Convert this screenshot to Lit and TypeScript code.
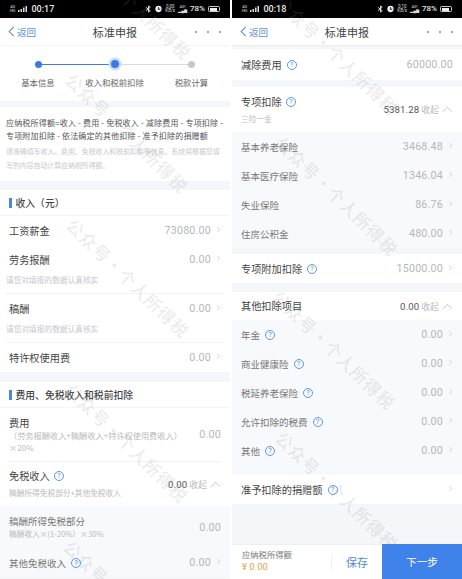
import { LitElement, html, css, nothing } from "lit";
import { customElement } from "lit/decorators.js";

const chev = html`<svg class="chev" viewBox="0 0 6 8"><path d="M1.5 1 L4.5 4 L1.5 7" fill="none" stroke="#c9ccd2" stroke-width="1"/></svg>`;
const up = html`<svg class="up" viewBox="0 0 12 8"><path d="M1 6.5 L6 1.5 L11 6.5" fill="none" stroke="#b9bcc2" stroke-width="1"/></svg>`;
const help = html`<span class="help">?</span>`;

function row(label: string, value: string, opts: { sub?: boolean; help?: boolean } = {}) {
  return html`<div class="row ${opts.sub ? "sub" : ""}">
    <div class="main">
      <div class="label">${label}${opts.help ? help : nothing}</div>
      <div class="value">${value}${chev}</div>
    </div>
  </div>`;
}

function noted(label: string, note: string) {
  return html`<div class="noted">
    <div class="main">
      <div class="label">${label}</div><div class="value">0.00${chev}</div>
    </div>
    <div class="note">${note}</div>
  </div>`;
}

function head(time: string, speed: string) {
  return html`
    <div class="status">
      <div class="st-left">
        <span class="tiny">4G<br />HD</span>
        <svg class="bars" viewBox="0 0 10 6"><rect x="0" y="4" width="1.5" height="2" fill="#ddd"/><rect x="2.5" y="3" width="1.5" height="3" fill="#ddd"/><rect x="5" y="1.5" width="1.5" height="4.5" fill="#ddd"/><rect x="7.5" y="0" width="1.5" height="6" fill="#ddd"/></svg>
        <span class="time">${time}</span>
      </div>
      <div class="st-right">
        <svg class="ic" viewBox="0 0 8 8"><path d="M1 2 L6 6 L4 7.5 V0.5 L6 2 L1 6" fill="none" stroke="#eee" stroke-width="1"/></svg>
        <svg class="ic" viewBox="0 0 8 8"><circle cx="4" cy="4" r="3.6" fill="#eee"/><path d="M4 2 V4.3 H6" fill="none" stroke="#000" stroke-width="1"/></svg>
        <span class="tiny speed">${speed}<br />KB/s</span>
        <span class="tiny">4G!<br />▂▄▆</span>
        <span class="pct">78%</span>
        <span class="batt"><i></i></span>
      </div>
    </div>
    <div class="nav">
      <div class="back"><svg viewBox="0 0 7 12"><path d="M6 1 L1 6 L6 11" fill="none" stroke="#4f88d8" stroke-width="1.1"/></svg>返回</div>
      <div class="title">标准申报</div>
      <div class="dots"><i></i><i></i><i></i></div>
    </div>`;
}

const marks: [number, number][] = [
  [130, 0], [127, 133], [128, 278], [127, 443], [125, 600],
  [337, 55], [337, 196], [334, 350], [337, 491],
];

@customElement("app-root")
export class AppRoot extends LitElement {
  static styles = css`
    :host { display: block; width: 462px; height: 579px; overflow: hidden; background: #fff;
      font-family: "Noto Sans CJK SC", "Noto Sans", sans-serif; position: relative; }
    .page { display: flex; gap: 2px; height: 579px; }
    .panel { flex: 1 1 0; min-width: 0; background: #f4f6f9; height: 579px; overflow: hidden; position: relative; display: flex; flex-direction: column; }
    .status { height: 18px; flex: none; background: #000; display: flex; justify-content: space-between; align-items: center; padding: 0 10px 0 10px; color: #e8e8e8; }
    .st-left, .st-right { display: flex; align-items: center; gap: 3px; }
    .tiny { font-size: 4px; line-height: 4px; color: #ddd; font-family: "Roboto", sans-serif; text-align: center; }
    .speed { font-size: 4.5px; }
    .bars { width: 10px; height: 6px; }
    .time { font: 500 9px/12px "Roboto", sans-serif; color: #e8e8e8; }
    .pct { font: 500 8px/12px "Roboto", sans-serif; color: #e8e8e8; }
    .ic { width: 7px; height: 8px; }
    .batt { width: 12px; height: 6px; border: 0.5px solid #ccc; border-radius: 1.5px; display: block; padding: 0.5px; box-sizing: border-box; }
    .batt i { display: block; height: 100%; width: 78%; background: #eee; }
    .nav { height: 27px; flex: none; background: #fff; display: flex; align-items: center; justify-content: space-between; padding: 0 9px 0 8px; position: relative; box-shadow: 0 1px 1px rgba(0,0,0,.04); z-index: 1; }
    .back { display: flex; align-items: center; gap: 2px; color: #5a8fd8; font-size: 9.5px; }
    .back svg { width: 7px; height: 11px; }
    .title { position: absolute; left: 0; right: 0; text-align: center; font-size: 11px; color: #444; letter-spacing: .1px; }
    .dots { display: flex; gap: 10px; }
    .dots i { width: 2px; height: 2px; border-radius: 50%; background: #6f90bd; display: block; }

    .steps { background: #fff; height: 56px; flex: none; padding-top: 10px; box-sizing: border-box; display: grid; grid-template-columns: 76px 77px 77px; position: relative; }
    .step { display: flex; flex-direction: column; align-items: center; font-size: 8.4px; color: #666; gap: 3px; position: relative; }
    .dotbox { height: 18px; display: flex; align-items: center; justify-content: center; }
    .dot { width: 7px; height: 7px; border-radius: 50%; background: #3d7be0; position: relative; z-index: 1; }
    .dot.cur { width: 8px; height: 8px; box-shadow: 0 0 0 2.5px #c9dcf8; }
    .dot.off { background: #c6c8cc; }
    .line { position: absolute; top: 18.5px; height: 1px; }
    .gap { flex: none; }
    .formula { background: #fff; padding: 9px 6px 0; height: 74px; box-sizing: border-box; flex: none; }
    .formula p { margin: 0; font-size: 8px; line-height: 13px; color: #555; letter-spacing: .18px; white-space: nowrap; }
    .formula small { display: block; margin-top: 2px; font-size: 6.9px; line-height: 14px; color: #c6c8cc; }
    .sec { background: #fff; height: 26px; flex: none; display: flex; align-items: center; gap: 4px; padding-left: 9px; font-size: 9.8px; font-weight: 500; color: #444; border-bottom: 1px solid #f4f5f7; box-sizing: border-box; }
    .sec::before { content: ""; width: 2.5px; height: 10px; background: #4a86e4; }

    .row { background: #fff; padding: 0 9px; flex: none; box-sizing: border-box; height: 29px; }
    .main { height: 29px; display: flex; align-items: center; justify-content: space-between; }
    .row.sub { background: #f8f9fc; }
    .label { font-size: 10.2px; color: #444; display: flex; align-items: center; gap: 5px; white-space: nowrap; }
    .sub .label { font-size: 9.5px; color: #777; }
    .value { font-size: 10.7px; color: #b4b7bd; display: flex; align-items: center; gap: 3px; font-family: "Roboto", "Noto Sans", sans-serif; letter-spacing: .2px; white-space: nowrap; }
    .chev { width: 5px; height: 7px; margin-left: 2px; position: relative; top: -1px; }
    .up { width: 11px; height: 7px; margin-left: 1px; }
    .help { width: 10px; height: 10px; box-sizing: border-box; border: 0.8px solid #5b97e8; border-radius: 50%; color: #5b97e8; font: 7.5px/8.5px "Roboto", sans-serif; text-align: center; display: inline-block; flex: none; }
    .card { background: #fff; flex: none; }
    .noted { height: 49px; margin: 0 6px; padding: 0 3px; border-bottom: 1px solid #f1f2f4; box-sizing: border-box; }
    .noted .main { margin: 0; }
    .note { font-size: 7.7px; line-height: 9px; color: #c6c8cc; margin: 1px 0 0 -3px; white-space: nowrap; }
    .fee { height: 54px; margin: 0 9px; display: flex; align-items: center; justify-content: space-between; border-bottom: 1px solid #f1f2f4; box-sizing: border-box; }
    .txt { display: flex; flex-direction: column; }
    .big { font-size: 10.2px; color: #444; line-height: 13px; }
    .txt small { font-size: 8.2px; line-height: 12px; color: #bbb; width: 180px; }
    .subcol { background: #f8f9fc; height: 42px; padding: 0 9px; flex: none; display: flex; align-items: center; justify-content: space-between; box-sizing: border-box; }
    .subcol .big { color: #777; font-size: 9.5px; }
    .subcol small { font-size: 7.7px; white-space: nowrap; }
    .collapsible { display: flex; align-items: center; justify-content: space-between; background: #fff; padding: 0 9px; box-sizing: border-box; flex: none; }
    .head { display: flex; flex-direction: column; gap: 6px; }
    .tt { font-size: 10.2px; color: #444; display: flex; gap: 4px; align-items: center; line-height: 12px; }
    .head small { font-size: 7.7px; line-height: 10px; color: #bbb; white-space: nowrap; }
    .act { display: flex; align-items: center; gap: 2px; font-family: "Roboto", sans-serif; font-size: 9.6px; color: #555; letter-spacing: .1px; }
    .act em { font-style: normal; color: #bbb; font-size: 8.8px; font-family: "Noto Sans CJK SC", sans-serif; }
    .spacer { flex: 1 1 0; }
    .foot { height: 35px; flex: none; background: #fff; display: flex; border-top: 1px solid #eceef1; box-sizing: border-box; }
    .sum { width: 99px; padding: 4px 0 0 10px; box-sizing: border-box; }
    .sum div { font-size: 8.3px; line-height: 11px; color: #777; }
    .sum b { font: 400 9.5px/14px "Roboto", sans-serif; color: #e8a04d; display: block; }
    .sep { width: 1px; height: 14px; background: #eef0f3; align-self: center; }
    .save { flex: 1; text-align: center; font-size: 11px; color: #4f88d8; align-self: center; }
    .next { width: 80px; background: #3f83ea; color: #fff; font-size: 10.7px; display: flex; align-items: center; justify-content: center; margin-top: -1px; }

    .wm { position: absolute; font-size: 17px; font-weight: 500; line-height: 20px; white-space: nowrap; color: rgba(130,130,135,.17); pointer-events: none; z-index: 5; transform: translate(-50%, -50%) rotate(44deg); letter-spacing: 1px; }
  `;

  render() {
    return html`<div class="page">
      <section class="panel">
        ${head("00:17", "0.00")}
        <div class="steps">
          <div class="line" style="left:38px;width:77px;background:#3d7be0"></div>
          <div class="line" style="left:115px;width:77px;background:#d8dadd"></div>
          <div class="step"><div class="dotbox"><div class="dot"></div></div>基本信息</div>
          <div class="step"><div class="dotbox"><div class="dot cur"></div></div>收入和税前扣除</div>
          <div class="step"><div class="dotbox"><div class="dot off"></div></div>税款计算</div>
        </div>
        <div class="gap" style="height:6px"></div>
        <div class="formula">
          <p>应纳税所得额=收入 - 费用 - 免税收入 - 减除费用 - 专项扣除 -</p>
          <p>专项附加扣除 - 依法确定的其他扣除 - 准予扣除的捐赠额</p>
          <small>请准确填写收入、费用、免税收入和税前扣除等信息，系统将根据您填写的内容自动计算应纳税所得额。</small>
        </div>
        <div class="gap" style="height:9px"></div>
        <div class="sec">收入（元）</div>
        ${row("工资薪金", "73080.00")}
        <div class="card">
          ${noted("劳务报酬", "请您对填报的数据认真核实")}
          ${noted("稿酬", "请您对填报的数据认真核实")}
        </div>
        ${row("特许权使用费", "0.00")}
        <div class="gap" style="height:10px"></div>
        <div class="sec">费用、免税收入和税前扣除</div>
        <div class="card">
          <div class="fee">
            <div class="txt"><div class="big">费用</div><small>（劳务报酬收入+稿酬收入+特许权使用费收入）×20%</small></div>
            <div class="value">0.00</div>
          </div>
        </div>
        <div class="collapsible" style="height:44px">
          <div class="head"><div class="tt">免税收入${help}</div><small>稿酬所得免税部分+其他免税收入</small></div>
          <div class="act">0.00 <em>收起</em>${up}</div>
        </div>
        <div class="subcol">
          <div class="txt"><div class="big">稿酬所得免税部分</div><small>稿酬收入×(1-20%）×30%</small></div>
          <div class="value">0.00</div>
        </div>
        ${row("其他免税收入", "0.00", { sub: true, help: true })}
      </section>

      <section class="panel">
        ${head("00:18", "0.10")}
        <div class="gap" style="height:4px"></div>
        <div class="row" style="height:31px"><div class="main" style="height:31px"><div class="label">减除费用 ${help}</div><div class="value">60000.00</div></div></div>
        <div class="gap" style="height:7px"></div>
        <div class="collapsible" style="height:45px">
          <div class="head"><div class="tt">专项扣除${help}</div><small>三险一金</small></div>
          <div class="act">5381.28 <em>收起</em>${up}</div>
        </div>
        ${row("基本养老保险", "3468.48", { sub: true })}
        ${row("基本医疗保险", "1346.04", { sub: true })}
        ${row("失业保险", "86.76", { sub: true })}
        ${row("住房公积金", "480.00", { sub: true })}
        <div class="gap" style="height:6px"></div>
        ${row("专项附加扣除", "15000.00", { help: true })}
        <div class="gap" style="height:9px"></div>
        <div class="collapsible" style="height:28px">
          <div class="tt">其他扣除项目</div>
          <div class="act">0.00 <em>收起</em>${up}</div>
        </div>
        ${row("年金", "0.00", { sub: true, help: true })}
        ${row("商业健康险", "0.00", { sub: true, help: true })}
        ${row("税延养老保险", "0.00", { sub: true, help: true })}
        ${row("允许扣除的税费", "0.00", { sub: true, help: true })}
        ${row("其他", "0.00", { sub: true, help: true })}
        <div class="gap" style="height:10px;background:#f8f9fc"></div>
        ${row("准予扣除的捐赠额", "", { help: true })}
        <div class="spacer"></div>
        <div class="foot">
          <div class="sum"><div>应纳税所得额</div><b>¥ 0.00</b></div>
          <div class="sep"></div>
          <div class="save">保存</div>
          <div class="next">下一步</div>
        </div>
      </section>
    </div>
    ${marks.map(([x, y]) => html`<div class="wm" style="left:${x}px;top:${y}px">公众号·个人所得税</div>`)}`;
  }
}
